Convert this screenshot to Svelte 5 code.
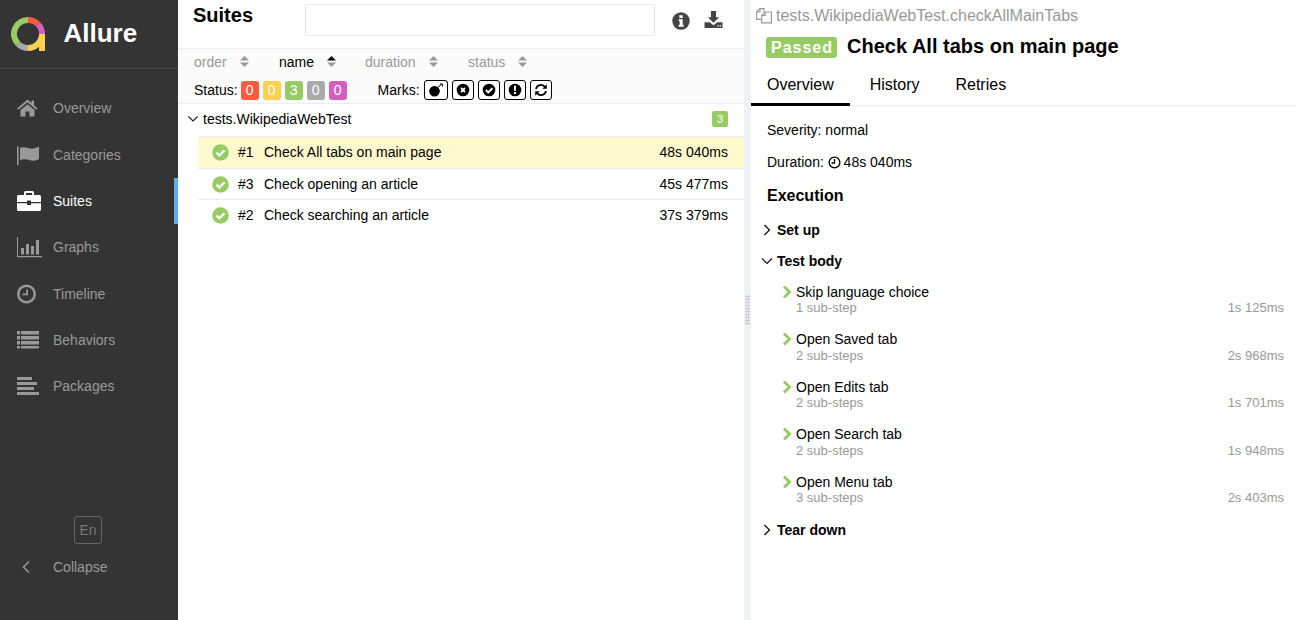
<script lang="ts">
  const nav = [
    { label: 'Overview', icon: 'home' },
    { label: 'Categories', icon: 'flag' },
    { label: 'Suites', icon: 'case', active: true },
    { label: 'Graphs', icon: 'chart' },
    { label: 'Timeline', icon: 'clock' },
    { label: 'Behaviors', icon: 'list' },
    { label: 'Packages', icon: 'align' },
  ];
  const sorters = [
    { label: 'order', w: 85 },
    { label: 'name', w: 86, active: true },
    { label: 'duration', w: 103 },
    { label: 'status', w: 70 },
  ];
  const counts = [
    { n: 0, c: '#fd5a3e' },
    { n: 0, c: '#ffd050' },
    { n: 3, c: '#97cc64' },
    { n: 0, c: '#aaaaaa' },
    { n: 0, c: '#d35ebe' },
  ];
  const rows = [
    { id: '#1', name: 'Check All tabs on main page', time: '48s 040ms', selected: true },
    { id: '#3', name: 'Check opening an article', time: '45s 477ms' },
    { id: '#2', name: 'Check searching an article', time: '37s 379ms' },
  ];
  const steps = [
    { name: 'Skip language choice', sub: '1 sub-step', time: '1s 125ms' },
    { name: 'Open Saved tab', sub: '2 sub-steps', time: '2s 968ms' },
    { name: 'Open Edits tab', sub: '2 sub-steps', time: '1s 701ms' },
    { name: 'Open Search tab', sub: '2 sub-steps', time: '1s 948ms' },
    { name: 'Open Menu tab', sub: '3 sub-steps', time: '2s 403ms' },
  ];
</script>

<div class="app">
  <aside class="side">
    <div class="brand">
      <svg class="logo" width="34" height="34" viewBox="0 0 34 34">
        <g fill="none" stroke-width="6">
          <path d="M17 3 A14 14 0 0 0 7.100 26.900" stroke="#97cc64" />
          <path d="M17 3 A14 14 0 0 1 26.900 7.100" stroke="#fd5a3e" />
          <path d="M26.900 7.100 A14 14 0 0 1 31 17" stroke="#d35ebe" />
          <path d="M17 31 A14 14 0 0 1 7.100 26.900" stroke="#aaaaaa" />
          <path d="M17 31 A14 14 0 0 0 31 17 V34" stroke="#ffd050" />
        </g>
      </svg>
      <span class="brand-name">Allure</span>
    </div>
    <nav class="menu">
      {#each nav as item}
        <div class="nav-item" class:active={item.active}>
          <svg class="nav-icon" width="26" height="24" viewBox="0 0 26 24" fill="currentColor">
            {#if item.icon === 'home'}
              <path d="M1 12.500 L11.500 3.500 L15.500 7 V4.500 H18 V9.200 L21.500 12.500 L20.300 13.800 L11.500 6.200 L2.300 13.800 Z" />
              <path d="M4.500 14 L11.500 8.200 L18.500 14 V20.500 H13.500 V15.500 H9.500 V20.500 H4.500 Z" />
            {:else if item.icon === 'flag'}
              <path d="M1 3.500 H2.600 V22 H1 Z" />
              <path d="M4 5 C8 3 11 5 14 5.500 C17 6 20 5 23 3.500 V16 C20 18 17 18 14 17.300 C11 16.500 8 15.500 4 17.500 Z" />
            {:else if item.icon === 'case'}
              <path d="M8 3.500 V6 H2.500 A1.500 1.500 0 0 0 1 7.500 V13 H11 V11.500 H15 V13 H25 V7.500 A1.500 1.500 0 0 0 23.500 6 H18 V3.500 A1.500 1.500 0 0 0 16.500 2 H9.500 A1.500 1.500 0 0 0 8 3.500 Z M10 4 H16 V6 H10 Z" fill-rule="evenodd" />
              <path d="M1 14.300 H11 V16 H15 V14.300 H25 V20.500 A1.500 1.500 0 0 1 23.500 22 H2.500 A1.500 1.500 0 0 1 1 20.500 Z" />
            {:else if item.icon === 'chart'}
              <path d="M1 2 H2 V21 H26 V22.300 H1 Z" />
              <path d="M5 13 H8 V19.500 H5 Z M10 9 H13 V19.500 H10 Z M15 11 H18 V19.500 H15 Z M20 5 H23 V19.500 H20 Z" />
            {:else if item.icon === 'clock'}
              <path d="M10.500 2.500 A9.500 9.500 0 1 0 10.500 21.500 A9.500 9.500 0 1 0 10.500 2.500 Z M10.500 5 A7 7 0 1 1 10.500 19 A7 7 0 1 1 10.500 5 Z" fill-rule="evenodd" />
              <path d="M10.200 7.500 H12 V13.300 H6.500 V11.500 H10.200 Z" />
            {:else if item.icon === 'list'}
              <path d="M1 3 H4 V6.500 H1 Z M5 3 H23 V6.500 H5 Z M1 8 H4 V11.500 H1 Z M5 8 H23 V11.500 H5 Z M1 13 H4 V16.500 H1 Z M5 13 H23 V16.500 H5 Z M1 18 H4 V20.500 H1 Z M5 18 H23 V20.500 H5 Z" />
            {:else}
              <path d="M1 3 H16 V6 H1 Z M1 8 H21 V11 H1 Z M1 13 H18 V16 H1 Z M1 18 H23 V21 H1 Z" />
            {/if}
          </svg>
          <span>{item.label}</span>
        </div>
      {/each}
    </nav>
    <div class="side-foot">
      <div class="lang"><span>En</span></div>
      <div class="nav-item collapse">
        <svg class="nav-icon" width="26" height="24" viewBox="0 0 26 24" fill="none" stroke="currentColor" stroke-width="1.400">
          <path d="M13 6.500 L7.500 12 L13 17.500" />
        </svg>
        <span>Collapse</span>
      </div>
    </div>
  </aside>

  <section class="tree">
    <header class="tree-head">
      <h2>Suites</h2>
      <div class="search"></div>
      <svg class="info" width="18" height="18" viewBox="0 0 18 18">
        <circle cx="9" cy="9" r="8.700" fill="#444" />
        <path d="M7.300 3.300 H10.700 V6 H7.300 Z M6.700 7.300 H10.700 V12.700 H11.700 V14.700 H6.700 V12.700 H7.700 V9.300 H6.700 Z" fill="#fff" />
      </svg>
      <svg class="download" width="19" height="17" viewBox="0 0 20 18" fill="#444">
        <path d="M7.300 0 H12.700 V6.500 H16 L10 12.500 L4 6.500 H7.300 Z" />
        <path d="M0.500 12 H6 L10 15 L14 12 H19.500 V18 H0.500 Z" />
        <path d="M14 15 H15.500 V16.300 H14 Z M16.500 15 H18 V16.300 H16.500 Z" fill="#fff" />
      </svg>
    </header>

    <div class="filters">
      <div class="sorters">
        {#each sorters as s}
          <div class="sorter" class:on={s.active} style="width: {s.w}px">
            <span>{s.label}</span>
            <svg class="sort-icon" width="9" height="11" viewBox="0 0 9 11">
              <path d="M4.500 0 L9 4.500 H0 Z" fill={s.active ? '#000' : '#999'} />
              <path d="M4.500 11 L9 6.500 H0 Z" fill="#999" />
            </svg>
          </div>
        {/each}
      </div>
      <div class="status-line">
        <span class="caption">Status:</span>
        <div class="counts">
          {#each counts as c}
            <span class="count" style="background: {c.c}">{c.n}</span>
          {/each}
        </div>
        <span class="caption marks-label">Marks:</span>
        <div class="marks">
          <span class="mark wide">
            <svg width="16" height="14" viewBox="0 0 16 14">
              <circle cx="6.500" cy="8.300" r="5.300" fill="#000" />
              <path d="M10 4 L13.500 1.500 M12 1 H14.500 V3.500" stroke="#000" fill="none" stroke-width="1" />
            </svg>
          </span>
          <span class="mark">
            <svg width="14" height="14" viewBox="0 0 14 14">
              <circle cx="7" cy="7" r="6.300" fill="#000" />
              <path d="M5 5 L9 9 M9 5 L5 9" stroke="#fff" stroke-width="1.800" />
            </svg>
          </span>
          <span class="mark">
            <svg width="14" height="14" viewBox="0 0 14 14">
              <circle cx="7" cy="7" r="6.300" fill="#000" />
              <path d="M3.800 7 L6.200 9.400 L10.400 5.200" stroke="#fff" stroke-width="2" fill="none" />
            </svg>
          </span>
          <span class="mark">
            <svg width="14" height="14" viewBox="0 0 14 14">
              <circle cx="7" cy="7" r="6.300" fill="#000" />
              <path d="M6 2.800 H8 L7.800 8 H6.200 Z M6 9 H8 V11 H6 Z" fill="#fff" />
            </svg>
          </span>
          <span class="mark">
            <svg width="14" height="14" viewBox="0 0 14 14" fill="none" stroke="#000" stroke-width="1.800">
              <path d="M2 6 A5 5 0 0 1 11 4" />
              <path d="M12 8 A5 5 0 0 1 3 10" />
              <path d="M12.800 1.300 V5.800 H8.300 Z M1.200 12.700 V8.200 H5.700 Z" fill="#000" stroke="none" />
            </svg>
          </span>
        </div>
      </div>
    </div>

    <div class="group-row">
      <svg width="10" height="6" viewBox="0 0 10 6" fill="none" stroke="#222" stroke-width="1.200">
        <path d="M0.500 0.500 L5 5 L9.500 0.500" />
      </svg>
      <span class="group-name">tests.WikipediaWebTest</span>
      <span class="group-count">3</span>
    </div>

    <ul class="cases">
      {#each rows as r}
        <li class="case" class:selected={r.selected}>
          <svg width="17" height="17" viewBox="0 0 17 17">
            <circle cx="8.500" cy="8.500" r="8.300" fill="#97cc64" />
            <path d="M4.500 8.700 L7.300 11.400 L12.500 6.200" stroke="#fff" stroke-width="2.300" fill="none" />
          </svg>
          <span class="case-id">{r.id}</span>
          <span class="case-name">{r.name}</span>
          <span class="case-time">{r.time}</span>
        </li>
      {/each}
    </ul>
  </section>

  <div class="splitter">
    <span class="grip"></span>
  </div>

  <section class="detail">
    <div class="crumb">
      <svg width="16" height="16" viewBox="1 1.500 14 14" fill="none" stroke="#999" stroke-width="1">
        <path d="M6 11.500 H1.500 V5 L4.500 2 H8 V5" />
        <path d="M6 14.500 V8 L9 5 H14.500 V14.500 Z" />
        <path d="M4.500 2 V5 H1.500 M9 5 V8 H6" />
      </svg>
      <span>tests.WikipediaWebTest.checkAllMainTabs</span>
    </div>
    <div class="title-row">
      <span class="passed">Passed</span>
      <h1>Check All tabs on main page</h1>
    </div>
    <div class="tabs">
      <span class="tab on">Overview</span>
      <span class="tab">History</span>
      <span class="tab">Retries</span>
    </div>

    <div class="body">
      <p class="meta">Severity: normal</p>
      <p class="meta duration">
        Duration:
        <svg width="13" height="13" viewBox="0 0 13 13" fill="none" stroke="#000" stroke-width="1.300">
          <circle cx="6.500" cy="6.500" r="5.400" />
          <path d="M6.500 3 V7 H3.500" />
        </svg>
        48s 040ms
      </p>
      <h3>Execution</h3>

      <div class="stage">
        <svg width="8" height="12" viewBox="0 0 8 12" fill="none" stroke="#111" stroke-width="1.300">
          <path d="M1.500 1 L6.500 6 L1.500 11" />
        </svg>
        <span>Set up</span>
      </div>
      <div class="stage open">
        <svg width="12" height="8" viewBox="0 0 12 8" fill="none" stroke="#111" stroke-width="1.200">
          <path d="M1 1.500 L6 6.500 L11 1.500" />
        </svg>
        <span>Test body</span>
      </div>

      <div class="steps">
        {#each steps as s}
          <div class="step">
            <svg class="step-arrow" width="10" height="14" viewBox="0 0 10 14" fill="none" stroke="#97cc64" stroke-width="3">
              <path d="M2 1.500 L7.500 7 L2 12.500" />
            </svg>
            <div class="step-text">
              <div class="step-name">{s.name}</div>
              <div class="step-sub"><span>{s.sub}</span><span>{s.time}</span></div>
            </div>
          </div>
        {/each}
      </div>

      <div class="stage tear">
        <svg width="8" height="12" viewBox="0 0 8 12" fill="none" stroke="#111" stroke-width="1.300">
          <path d="M1.500 1 L6.500 6 L1.500 11" />
        </svg>
        <span>Tear down</span>
      </div>
    </div>
  </section>
</div>

<style>
  :global(body) {
    margin: 0;
    background: #fff;
    overflow: hidden;
  }

  .app {
    display: flex;
    height: 620px;
    font-family: "Liberation Sans", Arial, sans-serif;
    font-size: 14px;
    color: #000;
  }

  /* sidebar */
  .side {
    width: 178px;
    flex: none;
    background: #343434;
    display: flex;
    flex-direction: column;
    color: #999;
  }

  .brand {
    height: 69px;
    box-sizing: border-box;
    border-bottom: 1px solid #4a4a4a;
    display: flex;
    align-items: center;
    padding-left: 11px;
  }

  .logo {
    flex: none;
  }

  .brand-name {
    margin: 0 0 2px 18.500px;
    font-size: 26px;
    font-weight: 700;
    color: #fff;
  }

  .menu {
    padding-top: 16.300px;
  }

  .nav-item {
    height: 46.300px;
    display: flex;
    align-items: center;
    padding-left: 16px;
    color: #999;
    box-sizing: border-box;
    border-right: 4px solid transparent;
  }

  .nav-item.active {
    color: #fff;
    border-right-color: #5bb0f2;
  }

  .nav-icon {
    width: 26px;
    flex: none;
    margin-right: 11px;
  }

  .side-foot {
    margin-top: auto;
    padding-bottom: 43px;
  }

  .lang {
    width: 28px;
    height: 28px;
    box-sizing: border-box;
    margin: 0 0 13px 74px;
    border: 1px solid #666;
    border-radius: 3px;
    display: flex;
    align-items: center;
    justify-content: center;
    color: #777;
    font-size: 14px;
  }

  .collapse {
    height: 20px;
  }

  /* suites pane */
  .tree {
    width: 566px;
    flex: none;
    display: flex;
    flex-direction: column;
  }

  .tree-head {
    height: 48px;
    flex: none;
    display: flex;
    align-items: flex-start;
    padding-left: 15px;
    box-sizing: border-box;
  }

  .tree-head h2 {
    margin: 3px 0 0;
    width: 112px;
    font-size: 20px;
    line-height: 24px;
    font-weight: 700;
  }

  .search {
    width: 350px;
    height: 32px;
    margin-top: 4px;
    box-sizing: border-box;
    border: 1px solid #e6e6e6;
  }

  .info {
    margin: 12px 0 0 17px;
  }

  .download {
    margin: 11px 0 0 14px;
  }

  .filters {
    height: 56px;
    flex: none;
    box-sizing: border-box;
    background: #fbfbfb;
    border-top: 1px solid #eaedf1;
    border-bottom: 1px solid #eaedf1;
    padding-left: 16px;
  }

  .sorters {
    display: flex;
    height: 25px;
    align-items: center;
  }

  .sorter {
    flex: none;
    display: flex;
    align-items: center;
    color: #999;
    gap: 13px;
  }

  .sorter.on {
    color: #000;
  }

  .status-line {
    display: flex;
    align-items: center;
    height: 24px;
    margin-top: 4px;
  }

  .caption {
    flex: none;
  }

  .counts {
    display: flex;
    gap: 4px;
    margin-left: 3px;
  }

  .count {
    width: 18px;
    height: 19px;
    border-radius: 3px;
    color: #fff;
    text-align: center;
    line-height: 19px;
  }

  .marks-label {
    margin-left: 31px;
  }

  .marks {
    display: flex;
    gap: 4px;
    margin-left: 4px;
  }

  .mark {
    width: 22px;
    height: 20px;
    box-sizing: border-box;
    border: 1px solid #000;
    border-radius: 3px;
    display: flex;
    align-items: center;
    justify-content: center;
    background: #fff;
  }

  .mark.wide {
    width: 24px;
  }

  .group-row {
    height: 32px;
    flex: none;
    box-sizing: border-box;
    display: flex;
    align-items: center;
    padding: 0 16px 2px 10px;
  }

  .group-name {
    margin-left: 5px;
    flex: 1;
  }

  .group-count {
    width: 16px;
    height: 16px;
    border-radius: 2px;
    background: #97cc64;
    color: #fff;
    font-size: 11px;
    line-height: 16px;
    text-align: center;
  }

  .cases {
    list-style: none;
    margin: 0 0 0 20px;
    padding: 0;
  }

  .case {
    height: 31px;
    display: flex;
    align-items: center;
    box-sizing: border-box;
    border-top: 1px solid #eaedf1;
    padding: 0 16px 0 14px;
  }

  .case.selected {
    height: 32px;
    padding-bottom: 1px;
    background: #fffacd;
  }

  .case-id {
    margin-left: 9px;
    width: 26px;
    flex: none;
  }

  .case-name {
    flex: 1;
  }

  .splitter {
    width: 7px;
    flex: none;
    background: #eef1f5;
    position: relative;
  }

  .grip {
    position: absolute;
    left: 1px;
    top: 295px;
    width: 5px;
    height: 30px;
    background-image: radial-gradient(#c6cbd1 1px, transparent 1px);
    background-size: 2.500px 3px;
  }

  /* test result pane */
  .detail {
    flex: 1;
    min-width: 0;
  }

  .crumb {
    display: flex;
    align-items: center;
    gap: 4px;
    padding: 7px 0 0 5px;
    height: 18px;
    font-size: 16px;
    color: #999;
  }

  .title-row {
    display: flex;
    align-items: center;
    padding: 9px 0 0 15px;
    height: 26px;
  }

  .passed {
    background: #97cc64;
    color: #fff;
    font-size: 16px;
    font-weight: 700;
    letter-spacing: 1px;
    line-height: 21px;
    padding: 0 4px 0 5px;
    border-radius: 3px;
  }

  .title-row h1 {
    margin: 0 0 2px 10px;
    font-size: 20px;
    line-height: 26px;
    font-weight: 700;
  }

  .tabs {
    display: flex;
    height: 35px;
    margin-top: 11px;
    box-sizing: border-box;
    border-bottom: 1px solid #eaedf1;
    font-size: 16px;
  }

  .tab {
    padding: 5px 16px 0;
    margin-right: 4px;
    height: 35px;
    box-sizing: border-box;
  }

  .tab.on {
    border-bottom: 3px solid #000;
  }

  .body {
    padding: 16px 12px 0 16px;
  }

  .meta {
    margin: 0 0 16px;
    line-height: 16px;
  }

  .meta.duration {
    margin-bottom: 17px;
  }

  .duration svg {
    vertical-align: -2px;
    margin-right: -1px;
  }

  .body h3 {
    margin: 0;
    font-size: 16px;
    line-height: 18px;
    font-weight: 700;
  }

  .stage {
    display: flex;
    align-items: center;
    height: 31px;
    font-weight: 700;
    gap: 6px;
    margin-left: -4px;
  }

  .stage:first-of-type {
    margin-top: 9px;
  }

  .stage.open {
    gap: 4px;
    margin-left: -6px;
  }

  .steps {
    padding-left: 15px;
    margin-top: 7.700px;
  }

  .step {
    display: flex;
    height: 47.500px;
    gap: 4px;
  }

  .step-arrow {
    flex: none;
    margin-top: 1px;
  }

  .step-text {
    flex: 1;
    min-width: 0;
  }

  .step-name {
    line-height: 16px;
  }

  .step-sub {
    display: flex;
    justify-content: space-between;
    color: #999;
    line-height: 16px;
    font-size: 13px;
    padding-top: 0.600px;
  }

  .tear {
    margin-top: -6.700px;
  }
</style>
